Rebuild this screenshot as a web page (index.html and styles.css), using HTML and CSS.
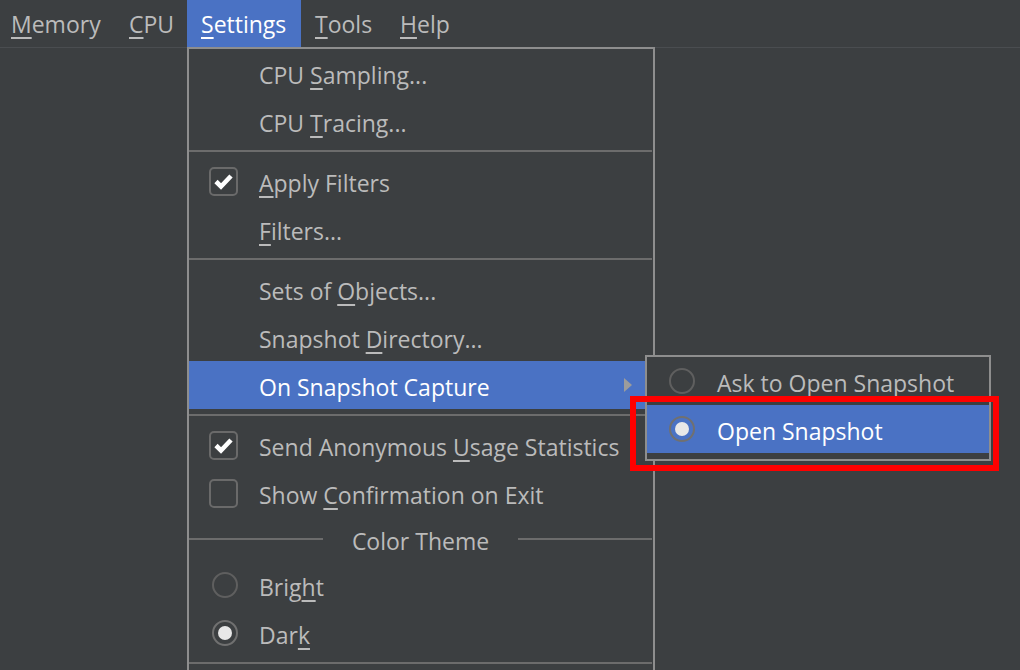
FILE: index.html
```html
<!DOCTYPE html>
<html>
<head>
<meta charset="utf-8">
<link rel="stylesheet" href="styles.css">
</head>
<body>
<div class="menubar">
  <div class="top"><u>M</u>emory</div>
  <div class="top"><u>C</u>PU</div>
  <div class="top active"><u>S</u>ettings
    <div class="dropdown">
      <div class="item"><span class="gutter"></span><span class="label">CPU <u>S</u>ampling...</span></div>
      <div class="item"><span class="gutter"></span><span class="label">CPU <u>T</u>racing...</span></div>
      <div class="sep"></div>
      <div class="item"><span class="gutter"><span class="check on"><svg width="25" height="25" viewBox="0 0 25 25"><path d="M5 12.5 L10 17.5 L20 7" fill="none" stroke="#ffffff" stroke-width="4.6" stroke-linejoin="miter" stroke-linecap="butt"/></svg></span></span><span class="label"><u>A</u>pply Filters</span></div>
      <div class="item"><span class="gutter"></span><span class="label"><u>F</u>ilters...</span></div>
      <div class="sep"></div>
      <div class="item"><span class="gutter"></span><span class="label">Sets of <u>O</u>bjects...</span></div>
      <div class="item"><span class="gutter"></span><span class="label">Snapshot <u>D</u>irectory...</span></div>
      <div class="item selected has-sub"><span class="gutter"></span><span class="label">On Snapshot Capture</span><span class="arrow"></span>
        <div class="submenu">
          <div class="item"><span class="gutter"><span class="radio"></span></span><span class="label">Ask to Open Snapshot</span></div>
          <div class="item selected marked"><span class="gutter"><span class="radio on"></span></span><span class="label">Open Snapshot</span></div>
        </div>
      </div>
      <div class="sep"></div>
      <div class="item"><span class="gutter"><span class="check on"><svg width="25" height="25" viewBox="0 0 25 25"><path d="M5 12.5 L10 17.5 L20 7" fill="none" stroke="#ffffff" stroke-width="4.6" stroke-linejoin="miter" stroke-linecap="butt"/></svg></span></span><span class="label">Send Anonymous <u>U</u>sage Statistics</span></div>
      <div class="item"><span class="gutter"><span class="check"></span></span><span class="label">Show <u>C</u>onfirmation on Exit</span></div>
      <div class="group-title"><span>Color Theme</span></div>
      <div class="item"><span class="gutter"><span class="radio plain"></span></span><span class="label">Brig<u>h</u>t</span></div>
      <div class="item"><span class="gutter"><span class="radio plain on"></span></span><span class="label">Dar<u>k</u></span></div>
      <div class="sep"></div>
      <div class="item"><span class="gutter"></span><span class="label"></span></div>
    </div>
  </div>
  <div class="top"><u>T</u>ools</div>
  <div class="top"><u>H</u>elp</div>
</div>
</body>
</html>
```

FILE: styles.css
```css
html, body {
  margin: 0;
  padding: 0;
}
body {
  background: #3c3f41;
  color: #bbbbbb;
  font-family: "Open Sans", "Noto Sans", "DejaVu Sans", sans-serif;
  font-size: 23px;
  width: 1020px;
  height: 670px;
  overflow: hidden;
}
u {
  text-decoration: underline;
  text-decoration-thickness: 2px;
  text-underline-offset: 4px;
}
.menubar {
  display: flex;
  height: 47px;
  border-bottom: 1px solid #4a4d50;
}
.top {
  position: relative;
  box-sizing: border-box;
  padding: 0 14px;
  line-height: 49px;
  white-space: nowrap;
}
.top:nth-child(1) { width: 115px; padding-left: 11px; }
.top:nth-child(2) { width: 72px; }
.top:nth-child(3) { width: 114px; }
.top:nth-child(4) { width: 85px; }
.top.active {
  background: #4a72c4;
  color: #ffffff;
  height: 47px;
}
.dropdown {
  position: absolute;
  left: 0;
  top: 47px;
  width: 468px;
  box-sizing: border-box;
  border: 2px solid #8e8e8e;
  border-bottom: none;
  background: #3c3f41;
  color: #bbbbbb;
  line-height: normal;
  z-index: 5;
}
.item {
  position: relative;
  display: flex;
  align-items: center;
  height: 48px;
  line-height: 48px;
}
.item.selected {
  background: #4a72c4;
  color: #ffffff;
}
.gutter {
  width: 70px;
  flex: none;
  display: flex;
  align-items: center;
  box-sizing: border-box;
  padding-left: 20px;
  height: 48px;
}
.label {
  flex: 1;
  position: relative;
  top: 2px;
}
.sep {
  height: 2px;
  background: #6c6c6c;
  margin: 5px 1px 5px 0;
}
.group-title {
  display: flex;
  align-items: center;
  height: 44px;
  margin-right: 1px;
}
.group-title::before,
.group-title::after {
  content: "";
  flex: 1;
  height: 2px;
  background: #6c6c6c;
}
.group-title span {
  padding: 0 29px;
  line-height: 44px;
  position: relative;
  top: 2px;
}
.check {
  width: 29px;
  height: 29px;
  box-sizing: border-box;
  border: 2px solid #6a6a6a;
  border-radius: 5px;
  display: flex;
  align-items: center;
  justify-content: center;
}
.check svg {
  display: block;
}
.radio {
  width: 26px;
  height: 26px;
  box-sizing: border-box;
  border: 2px solid #5f5f5f;
  border-radius: 50%;
  display: flex;
  align-items: center;
  justify-content: center;
  margin-left: 3px;
}
.submenu .radio {
  margin-left: 2px;
}
.radio.on {
  border-color: #707070;
}
.radio.on::after {
  content: "";
  width: 14px;
  height: 14px;
  border-radius: 50%;
  background: #e8e8e8;
}
.arrow {
  width: 0;
  height: 0;
  border-left: 8px solid #9c9c9c;
  border-top: 7.5px solid transparent;
  border-bottom: 7.5px solid transparent;
  margin-right: 21px;
}
.submenu {
  position: absolute;
  left: 456px;
  top: -6px;
  width: 346px;
  box-sizing: border-box;
  border: 2px solid #8e8e8e;
  padding-bottom: 6px;
  background: #3c3f41;
  color: #bbbbbb;
}
.submenu .item.selected {
  color: #ffffff;
}
.marked::after {
  content: "";
  position: absolute;
  left: -17px;
  top: -9px;
  right: -10px;
  bottom: -18px;
  border: 6px solid #ff0000;
  pointer-events: none;
}
```
